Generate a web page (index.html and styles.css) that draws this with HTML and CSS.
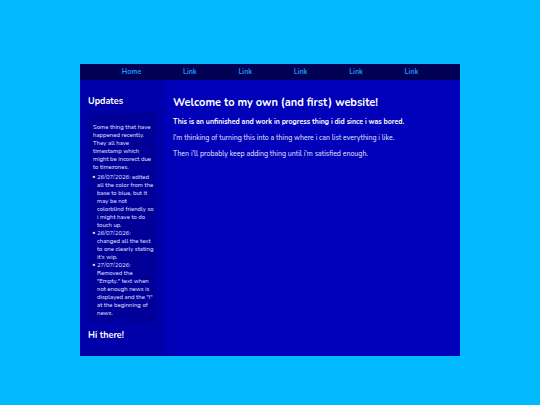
FILE: index.html
```
<!DOCTYPE html>
<html lang="en">
<head>
    <meta charset="UTF-8">
    <meta name="viewport" content="width=device-width, initial-scale=1.0">
    <title>My website</title>
    <link rel="stylesheet" href="styles.css">
</head>
<body>

    <div class="container">
        <nav class="navbar">
            <a href="#">Home</a>
            <a href="#">Link</a>
            <a href="#">Link</a>
            <a href="#">Link</a>
            <a href="#">Link</a>
            <a href="#">Link</a>
        </nav>

        <div class="content">
            <aside class="sidebar">
                <h2>Updates</h2>
                <div class="updates">
                    <p>Some thing that have happened recently. They all have timestamp which might be incorect due to timezones.</p>
                    <ul>
                        <li>26/07/2026: edited all the color from the base to blue, but it may be not<br>colorblind friendly so i might have to do<br>touch up.</li>
                        <li>26/07/2026:<br>changed all the text to one clearly stating it's wip.</li>
                        <li>27/07/2026:<br>Removed the "Empty." text when not enough news is displayed and the "i" at the beginning of news.</li>
                    </ul>
                </div>
                <h2>Hi there!</h2>
            </aside>

            <main class="main">
                <h1>Welcome to my own (and first) website!</h1>
                <p><strong>This is an unfinished and work in progress thing i did since i was bored.</strong></p>
                <p>I'm thinking of turning this into a thing where i can list everything i like.</p>
                <p>Then i'll probably keep adding thing until i'm satisfied enough.</p>
            </main>
        </div>
    </div>

</body>
</html>
```

FILE: styles.css
```
* {
    box-sizing: border-box;
}
body {
    display: flex;
    align-items: center;
    justify-content: center;
    min-height: 100vh;
    margin: 0;
    padding: 24px 80px 9px;
    background-color: #00b9ff;
    color: #e6e6ff;
    font-family: Nunito, "Open Sans", sans-serif;
    font-size: 7px;
    line-height: 8px;
}
.container {
    width: 100%;
    max-width: 900px;
    background-color: #0000b8;
}
.navbar {
    display: flex;
    justify-content: space-evenly;
    padding: 4px 0;
    background-color: #000054;
}
.navbar a {
    color: #2196f3;
    font-weight: bold;
    text-decoration: none;
}
.content {
    display: grid;
    grid-template-columns: 84px 1fr;
}
.sidebar {
    padding: 16px 8px;
    background-color: #0000a8;
}
h1, h2 {
    margin: 0;
    color: #fff;
    font-weight: bold;
}
h1 {
    font-size: 11px;
    line-height: 14px;
}
h2 {
    font-size: 9px;
    line-height: 10px;
}
.updates {
    margin: 7px 0 8px;
    padding: 10px 0 5px 5px;
    background-color: #000099;
    font-size: 6px;
}
.updates p {
    margin: 0 4px 2px 0;
}
.updates ul {
    margin: 0;
    padding-left: 4px;
    list-style-type: "• ";
}
.main {
    padding: 16px 9px;
}
.main p {
    margin: 8px 0;
}
.main strong {
    color: #fff;
}
```
